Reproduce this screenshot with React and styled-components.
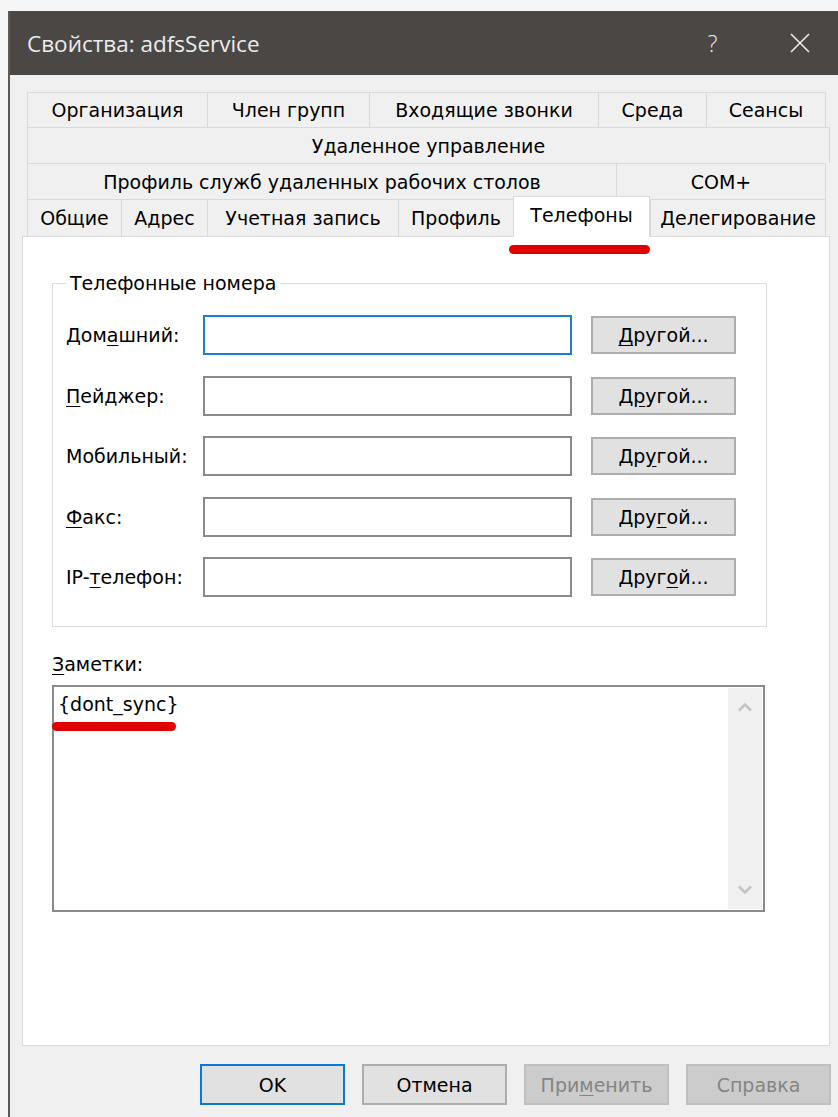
import React from 'react';
import styled, { createGlobalStyle, css } from 'styled-components';

const GlobalStyle = createGlobalStyle`
  html, body {
    margin: 0;
    padding: 0;
    background: #f6f6f6;
  }
  body {
    font-family: "DejaVu Sans", "Liberation Sans", sans-serif;
  }
  * {
    box-sizing: border-box;
  }
`;

const Desk = styled.div`
  width: 838px;
  height: 1117px;
  overflow: hidden;
  padding: 11px 0 0 8px;
  background: #f6f6f6;
`;

const Frame = styled.div`
  width: 840px;
  height: 1110px;
  display: flex;
  flex-direction: column;
  background: #f0f0f0;
  border-left: 2px solid #5a5a5a;
`;

const TitleBar = styled.div`
  height: 64px;
  flex-shrink: 0;
  display: flex;
  align-items: center;
  padding: 0 5px 0 17px;
  background: #4a4745;
  color: #ececec;
`;

const Title = styled.div`
  flex: 1;
  font-family: "Open Sans", "Noto Sans", sans-serif;
  font-size: 22.5px;
  letter-spacing: 0;
`;

const CaptionButton = styled.div`
  width: 87px;
  height: 100%;
  display: flex;
  align-items: center;
  justify-content: center;
  font-family: "Open Sans", "Noto Sans", sans-serif;
  font-size: 23px;
  font-weight: 300;
`;

const Body = styled.div`
  display: flex;
  flex-direction: column;
  padding: 17px 0 0 12px;
`;

const TabStrip = styled.div`
  position: relative;
  z-index: 1;
  display: flex;
  flex-direction: column;
  margin-left: 5px;
`;

const TabRow = styled.div`
  display: flex;
  height: ${(p) => p.$h}px;
`;

const Tab = styled.div`
  position: relative;
  width: ${(p) => p.$w}px;
  display: flex;
  align-items: center;
  justify-content: center;
  border-top: 1px solid #d9d9d9;
  border-left: 1px solid #d9d9d9;
  background: #f0f0f0;
  font-size: 19px;
  color: #000;
  white-space: nowrap;

  &:last-child {
    border-right: 1px solid #d9d9d9;
  }

  ${(p) => p.$active && css`
    z-index: 2;
    height: calc(100% + 4px);
    margin-top: -3px;
    align-items: flex-start;
    padding-top: 7px;
    border-right: 1px solid #d9d9d9;
    background: #fff;
  `}
`;

const Marker = styled.div`
  position: absolute;
  height: 9px;
  border-radius: 5px;
  background: #e10000;
`;

const TabMarker = styled(Marker)`
  left: -5px;
  right: -1px;
  top: calc(100% + 8px);
`;

const Panel = styled.div`
  width: 808px;
  height: 810px;
  display: flex;
  flex-direction: column;
  align-items: flex-start;
  padding: 35px 0 0 29px;
  background: #fff;
  border: 1px solid #d9d9d9;
`;

const Group = styled.fieldset`
  width: 715px;
  margin: 0;
  padding: 21px 0 29px 13px;
  border: 1px solid #dcdcdc;
`;

const Legend = styled.legend`
  padding: 0 4px;
  font-size: 19px;
  line-height: 22px;
  color: #000;
`;

const Rows = styled.div`
  display: flex;
  flex-direction: column;
  gap: 20.5px;
`;

const PhoneRow = styled.div`
  display: flex;
  align-items: center;
  height: 40px;
`;

const Label = styled.div`
  width: 137px;
  font-size: 19px;
  color: #000;
`;

const Key = styled.span`
  text-decoration: underline;
  text-underline-offset: 3px;
`;

const Field = styled.div`
  width: 369px;
  height: 40px;
  background: #fff;
  border: 2px solid ${(p) => (p.$focused ? '#1a7fd6' : '#8a8a8a')};
`;

const Button = styled.div`
  width: 145px;
  height: ${(p) => p.$h || 38}px;
  display: flex;
  align-items: center;
  justify-content: center;
  font-size: 19px;
  color: #000;
  background: #e1e1e1;
  border: 2px solid #adadad;

  ${(p) => p.$primary && css`
    border-color: #0a78d7;
  `}

  ${(p) => p.$disabled && css`
    color: #848484;
    background: #cccccc;
    border-color: #bfbfbf;
  `}
`;

const SideButton = styled(Button)`
  margin-left: 19px;
`;

const NotesLabel = styled.div`
  margin: 26px 0 10px;
  font-size: 19px;
  line-height: 22px;
  color: #000;
`;

const NotesBox = styled.div`
  position: relative;
  width: 713px;
  height: 227px;
  display: flex;
  padding: 1px;
  background: #fff;
  border: 2px solid #8a8a8a;
`;

const NotesText = styled.div`
  flex: 1;
  padding: 5px 3px;
  font-size: 19px;
  line-height: 22px;
  color: #000;
`;

const NoteMarker = styled(Marker)`
  left: -2px;
  top: 35px;
  width: 124px;
`;

const ScrollBar = styled.div`
  width: 34px;
  display: flex;
  flex-direction: column;
  align-items: center;
  justify-content: space-between;
  padding: 14px 0 14px;
  background: #f0f0f0;
`;

const Footer = styled.div`
  display: flex;
  gap: 17px;
  margin: 18px 0 0 178px;
`;

const Chevron = ({ up }) => (
  <svg width="16" height="10" viewBox="0 0 16 10">
    <path
      d={up ? 'M2 8.5 L8 2.5 L14 8.5' : 'M2 1.5 L8 7.5 L14 1.5'}
      fill="none"
      stroke="#c3c3c3"
      strokeWidth="2.6"
    />
  </svg>
);

const CloseGlyph = () => (
  <svg width="22" height="22" viewBox="0 0 22 22">
    <path d="M2 2 L20 20 M20 2 L2 20" stroke="#ececec" strokeWidth="1.6" />
  </svg>
);

const tabRows = [
  {
    h: 35,
    tabs: [
      { w: 180, label: 'Организация' },
      { w: 162, label: 'Член групп' },
      { w: 229, label: 'Входящие звонки' },
      { w: 108, label: 'Среда' },
      { w: 120, label: 'Сеансы' },
    ],
  },
  { h: 36, tabs: [{ w: 803, label: 'Удаленное управление' }] },
  {
    h: 36,
    tabs: [
      { w: 589, label: 'Профиль служб удаленных рабочих столов' },
      { w: 210, label: 'COM+' },
    ],
  },
  {
    h: 37,
    tabs: [
      { w: 94, label: 'Общие' },
      { w: 86, label: 'Адрес' },
      { w: 191, label: 'Учетная запись' },
      { w: 115, label: 'Профиль' },
      { w: 137, label: 'Телефоны', active: true },
      { w: 176, label: 'Делегирование' },
    ],
  },
];

// label split around its access key: [before, key, after]
const phones = [
  { label: ['Дом', 'а', 'шний:'], other: ['', 'Д', 'ругой...'], focused: true },
  { label: ['', 'П', 'ейджер:'], other: ['Д', 'р', 'угой...'] },
  { label: ['Мобильный:', '', ''], other: ['Др', 'у', 'гой...'] },
  { label: ['', 'Ф', 'акс:'], other: ['Дру', 'г', 'ой...'] },
  { label: ['IP-', 'т', 'елефон:'], other: ['Друг', 'о', 'й...'] },
];

const Accel = ({ parts }) => (
  <>
    {parts[0]}
    {parts[1] && <Key>{parts[1]}</Key>}
    {parts[2]}
  </>
);

export default function App() {
  return (
    <>
      <GlobalStyle />
      <Desk>
        <Frame>
          <TitleBar>
            <Title>Свойства: adfsService</Title>
            <CaptionButton>?</CaptionButton>
            <CaptionButton>
              <CloseGlyph />
            </CaptionButton>
          </TitleBar>

          <Body>
            <TabStrip>
              {tabRows.map((row, i) => (
                <TabRow key={i} $h={row.h}>
                  {row.tabs.map((t) => (
                    <Tab key={t.label} $w={t.w} $active={t.active}>
                      {t.label}
                      {t.active && <TabMarker />}
                    </Tab>
                  ))}
                </TabRow>
              ))}
            </TabStrip>

            <Panel>
              <Group>
                <Legend>Телефонные номера</Legend>
                <Rows>
                  {phones.map((p, i) => (
                    <PhoneRow key={i}>
                      <Label>
                        <Accel parts={p.label} />
                      </Label>
                      <Field $focused={p.focused} />
                      <SideButton>
                        <Accel parts={p.other} />
                      </SideButton>
                    </PhoneRow>
                  ))}
                </Rows>
              </Group>

              <NotesLabel>
                <Key>З</Key>аметки:
              </NotesLabel>
              <NotesBox>
                <NotesText>{'{dont_sync}'}</NotesText>
                <ScrollBar>
                  <Chevron up />
                  <Chevron />
                </ScrollBar>
                <NoteMarker />
              </NotesBox>
            </Panel>

            <Footer>
              <Button $h={41} $primary>OK</Button>
              <Button $h={41}>Отмена</Button>
              <Button $h={41} $disabled>
                При<Key>м</Key>енить
              </Button>
              <Button $h={41} $disabled>Справка</Button>
            </Footer>
          </Body>
        </Frame>
      </Desk>
    </>
  );
}
